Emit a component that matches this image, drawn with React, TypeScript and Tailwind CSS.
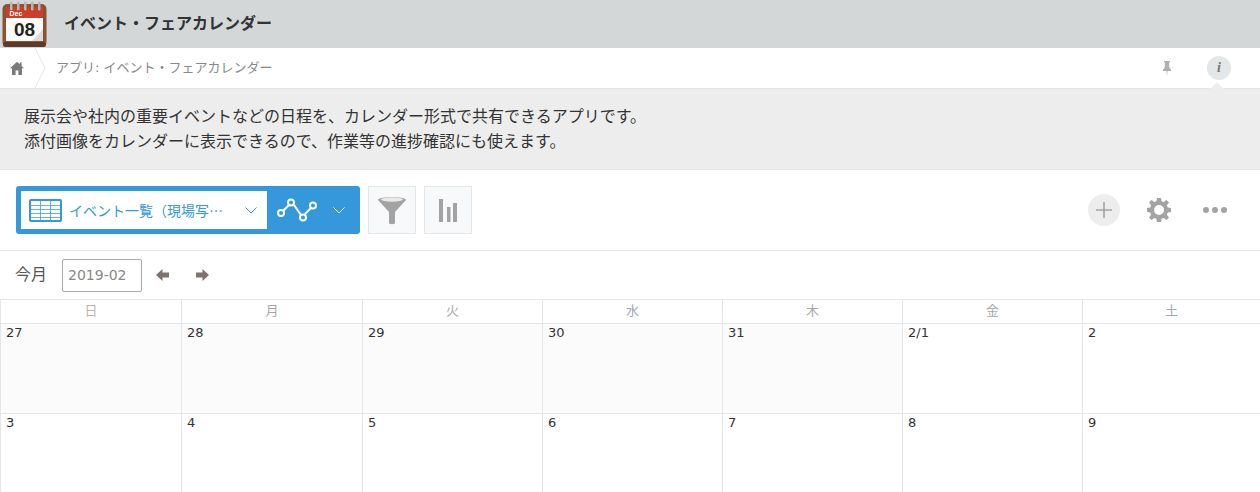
const FONT = "font-['DejaVu_Sans','Noto_Sans_CJK_JP',sans-serif]";

const weekdays = ["日", "月", "火", "水", "木", "金", "土"];
const weekdayColors = ["text-[#c4b0b0]", "text-[#a8a8a8]", "text-[#a8a8a8]", "text-[#a0a8b4]", "text-[#a8a8a8]", "text-[#a8a8a8]", "text-[#a0a8b4]"];
const rows = [
  ["27", "28", "29", "30", "31", "2/1", "2"],
  ["3", "4", "5", "6", "7", "8", "9"],
];
const gridCols = "grid grid-cols-[181px_181px_180px_180px_180px_180px_1fr]";

const CalendarIcon = () => (
  <svg width="46" height="46" viewBox="0 0 46 46" className="shrink-0">
    <rect x="0.500" y="3" width="44" height="43" rx="5" fill="#8a5232" />
    <rect x="1" y="41" width="43" height="5" rx="2.500" fill="#5f3a25" />
    <rect x="4" y="6" width="37" height="12" fill="#c8402a" />
    <rect x="4" y="17" width="37" height="23" fill="#fbfbfb" />
    <path d="M41 28v12H30z" fill="#dcdcdc" />
    {[9, 16, 23, 30, 37].map((x) => (
      <rect key={x} x={x - 1} y="0.500" width="2.500" height="9" rx="1.200" fill="#b9b5b2" />
    ))}
    <text x="7.500" y="15" fontSize="7" fontWeight="700" fill="#fff" fontFamily="Liberation Sans, sans-serif">Dec</text>
    <text x="22.500" y="35" fontSize="19" fontWeight="700" textAnchor="middle" fill="#222" fontFamily="Liberation Sans, sans-serif">08</text>
  </svg>
);

const HomeIcon = () => (
  <svg width="14" height="14" viewBox="0 0 14 14" fill="#7b7b7b">
    <path d="M7 .8 0 7.200h2V14h3.600V9.400h2.800V14H12V7.200h2l-2.400-2.200V1.400H9.800v1.900z" />
  </svg>
);

const ChevronDown = ({ color }: { color: string }) => (
  <svg width="12" height="7" viewBox="0 0 12 7" fill="none" stroke={color} strokeWidth="1">
    <path d="M.5.500l5.500 5.500L11.500.500" />
  </svg>
);

const Arrow = ({ flip }: { flip?: boolean }) => (
  <svg width="13" height="12" viewBox="0 0 13 12" fill="#7d7270" className={flip ? "-scale-x-100" : ""}>
    <path d="M6.500 0 0 6l6.500 6V8.400H13V3.600H6.500z" />
  </svg>
);

export default function App() {
  return (
    <div className={`w-[1260px] h-[492px] overflow-hidden bg-white text-[#333] ${FONT}`}>
      <header className="h-12 bg-[#d4d7d7] flex items-center pl-0.5 gap-4">
        <CalendarIcon />
        <h1 className="text-base font-bold text-[#333] leading-none">イベント・フェアカレンダー</h1>
      </header>

      <nav className="h-[41px] border-b border-[#e3e7e8] flex items-center relative">
        <div className="w-[34px] flex justify-center">
          <HomeIcon />
        </div>
        <svg width="12" height="40" viewBox="0 0 12 40" fill="none" stroke="#e3e7e8" className="shrink-0">
          <path d="M1 0l10 20L1 40" />
        </svg>
        <span className="ml-[10px] text-[13px] text-[#888]">アプリ: イベント・フェアカレンダー</span>
        <div className="ml-auto mr-[29px] flex items-center gap-9">
          <svg width="8" height="15" viewBox="0 0 8 15" fill="#b0b0b0">
            <path d="M1 0h6v1.500H6l.3 5L8 8.500V10H4.500L4 15l-.5-5H0V8.500l1.700-2 .3-5H1z" />
          </svg>
          <div className="w-6 h-6 rounded-full bg-[#e3e7e8] flex items-center justify-center font-['Liberation_Serif',serif] italic font-bold text-sm text-[#777]">
            i
          </div>
        </div>
        <div className="absolute right-[36px] -bottom-px w-0 h-0 border-x-[7px] border-x-transparent border-b-[7px] border-b-[#ededed]" />
      </nav>

      <section className="h-[81px] bg-[#ededed] border-b border-[#e3e7e8] px-6 pt-[15px] text-base leading-[25px] text-[#333]">
        <p>展示会や社内の重要イベントなどの日程を、カレンダー形式で共有できるアプリです。</p>
        <p>添付画像をカレンダーに表示できるので、作業等の進捗確認にも使えます。</p>
      </section>

      <section className="h-[81px] border-b border-[#e3e7e8] pl-4 pr-[33px] flex items-center">
        <div className="w-[344px] h-12 bg-[#3498db] rounded-[3px] p-[5px] flex items-center">
          <div className="w-[246px] h-[38px] bg-white flex items-center pl-[8px] pr-[10px] text-sm text-[#3498db]">
            <svg width="33" height="23" viewBox="0 0 33 23" fill="none" stroke="#3498db" className="shrink-0">
              <rect x="1" y="1" width="31" height="21" rx="1" strokeWidth="2" />
              <path d="M1 6.500h31M1 10.500h31M1 14.500h31M1 18.500h31M11.500 2v19M21.500 2v19" strokeWidth="1" strokeOpacity="0.750" />
            </svg>
            <span className="ml-[7px] whitespace-nowrap font-['Noto_Sans_CJK_JP',sans-serif]">イベント一覧（現場写…</span>
            <span className="ml-auto"><ChevronDown color="#3498db" /></span>
          </div>
          <svg width="40" height="26" viewBox="0 0 40 26" fill="none" stroke="#fff" strokeWidth="2" className="ml-[10px] shrink-0">
            <path d="M6 14l6-6M17 8l7 10M28 17l6-6" />
            <circle cx="4" cy="16" r="3" />
            <circle cx="14" cy="5.500" r="3" />
            <circle cx="26" cy="20.500" r="3" />
            <circle cx="36" cy="8.500" r="3" />
          </svg>
          <span className="ml-[16px]"><ChevronDown color="#fff" /></span>
        </div>
        <button className="ml-2 w-12 h-12 bg-[#f7f9fa] border border-[#e3e7e8] flex items-center justify-center">
          <svg width="30" height="30" viewBox="0 0 30 30">
            <path d="M1 5c0-4 28-4 28 0L18 17v11.500q-3 1.500-6 0V17z" fill="#a3a3a3" />
            <ellipse cx="15" cy="4.500" rx="11" ry="2.200" fill="#e9e9e9" />
          </svg>
        </button>
        <button className="ml-2 w-12 h-12 bg-[#f7f9fa] border border-[#e3e7e8] flex items-center justify-center">
          <svg width="18" height="23" viewBox="0 0 18 23" fill="#a3a3a3">
            <rect x="0" y="0" width="4" height="23" />
            <rect x="8" y="8" width="3.500" height="15" />
            <rect x="14" y="4" width="4" height="19" />
          </svg>
        </button>
        <div className="ml-auto flex items-center">
          <div className="w-8 h-8 rounded-full bg-[#ededed] flex items-center justify-center">
            <svg width="16" height="16" viewBox="0 0 16 16" stroke="#a3a3a3" strokeWidth="1.600">
              <path d="M8 0v16M0 8h16" />
            </svg>
          </div>
          <svg width="24" height="24" viewBox="0 0 24 24" fill="#a3a3a3" className="ml-[27px]">
            <path fillRule="evenodd" d="M10 0h4l.6 3.200 2.200.9L19.500 2 22 4.500l-2.100 2.700.9 2.200L24 10v4l-3.200.6-.9 2.200L22 19.500 19.500 22l-2.700-2.100-2.200.9L14 24h-4l-.6-3.200-2.200-.9L4.500 22 2 19.500l2.100-2.700-.9-2.200L0 14v-4l3.200-.6.9-2.200L2 4.500 4.500 2l2.700 2.100 2.200-.9zM12 7a5 5 0 1 0 0 10 5 5 0 0 0 0-10z" />
          </svg>
          <div className="ml-[32px] flex gap-[3px]">
            <span className="w-[6px] h-[6px] rounded-full bg-[#a3a3a3]" />
            <span className="w-[6px] h-[6px] rounded-full bg-[#a3a3a3]" />
            <span className="w-[6px] h-[6px] rounded-full bg-[#a3a3a3]" />
          </div>
        </div>
      </section>

      <section className="h-12 flex items-center pl-[15px]">
        <button className="text-base text-[#555]">今月</button>
        <div className="ml-[15px] w-20 h-[33px] border border-[#aaa] rounded-[2px] px-[5px] flex items-center text-sm text-[#888]">
          2019-02
        </div>
        <span className="ml-[14px]"><Arrow /></span>
        <span className="ml-[27px]"><Arrow flip /></span>
      </section>

      <div className={`${gridCols} border-t border-[#e3e7e8] h-[25px]`}>
        {weekdays.map((d, i) => (
          <div key={d} className={`border-l border-b border-[#e3e7e8] text-center text-[13px] leading-[21px] ${weekdayColors[i]}`}>
            {d}
          </div>
        ))}
      </div>
      {rows.map((row, r) => (
        <div key={r} className={`${gridCols} h-[90px]`}>
          {row.map((n, i) => (
            <div
              key={n}
              className={`border-l border-b border-[#e3e7e8] pl-[5px] pt-px text-[13px] leading-[16px] text-[#333] ${r === 0 && i < 5 ? "bg-[#fbfbfb]" : ""}`}
            >
              {n}
            </div>
          ))}
        </div>
      ))}
    </div>
  );
}
